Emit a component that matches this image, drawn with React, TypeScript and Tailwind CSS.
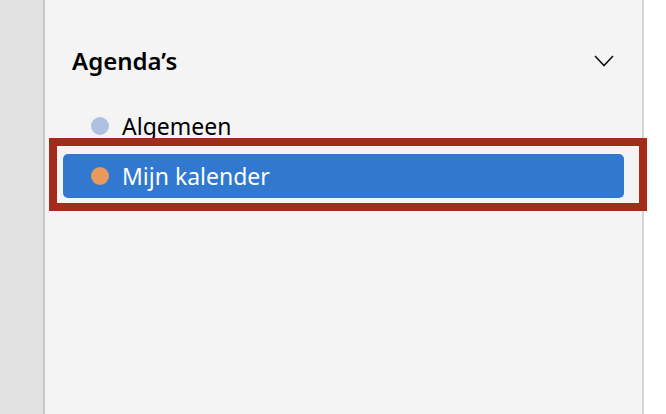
export default function App() {
  const calendars = [
    { name: 'Algemeen', color: 'bg-[#adc1e1]', active: false },
    { name: 'Mijn kalender', color: 'bg-[#e8995c]', active: true },
  ];

  return (
    <div className="flex h-[414px] w-[666px] overflow-hidden bg-white font-['Noto_Sans',sans-serif]">
      {/* left rail */}
      <div className="w-[45px] shrink-0 border-r-2 border-[#c7c7c7] bg-[#e1e1e1]" />

      {/* calendar panel */}
      <div className="relative w-[599px] shrink-0 border-r-2 border-[#d6d6d8] bg-[#f4f4f4]">
        <div className="mt-[39px] flex h-[44px] items-center justify-between pl-[27px] pr-[28px]">
          <h2 className="text-[24px] font-semibold text-black">Agenda’s</h2>
          <svg width="20" height="12" viewBox="0 0 20 12" fill="none">
            <path d="M1 1l9 9.5L19 1" stroke="#111" strokeWidth="1.6" />
          </svg>
        </div>

        <ul className="mt-[21px] flex flex-col gap-[6px] px-[18px]">
          {calendars.map(c => (
            <li
              key={c.name}
              className={`flex h-[44px] items-center gap-[13px] rounded-[5px] pl-[28px] ${
                c.active ? 'bg-[#3078d0] text-white' : 'text-black'
              }`}
            >
              <span className={`h-[18px] w-[18px] rounded-full ${c.color}`} />
              <span className="text-[23px] leading-none">{c.name}</span>
            </li>
          ))}
        </ul>

        {/* highlight annotation */}
        <div className="pointer-events-none absolute left-[4px] top-[138px] h-[73px] w-[598px] border-[8px] border-[#a42a19]" />
      </div>

      <div className="flex-1" />
    </div>
  );
}
